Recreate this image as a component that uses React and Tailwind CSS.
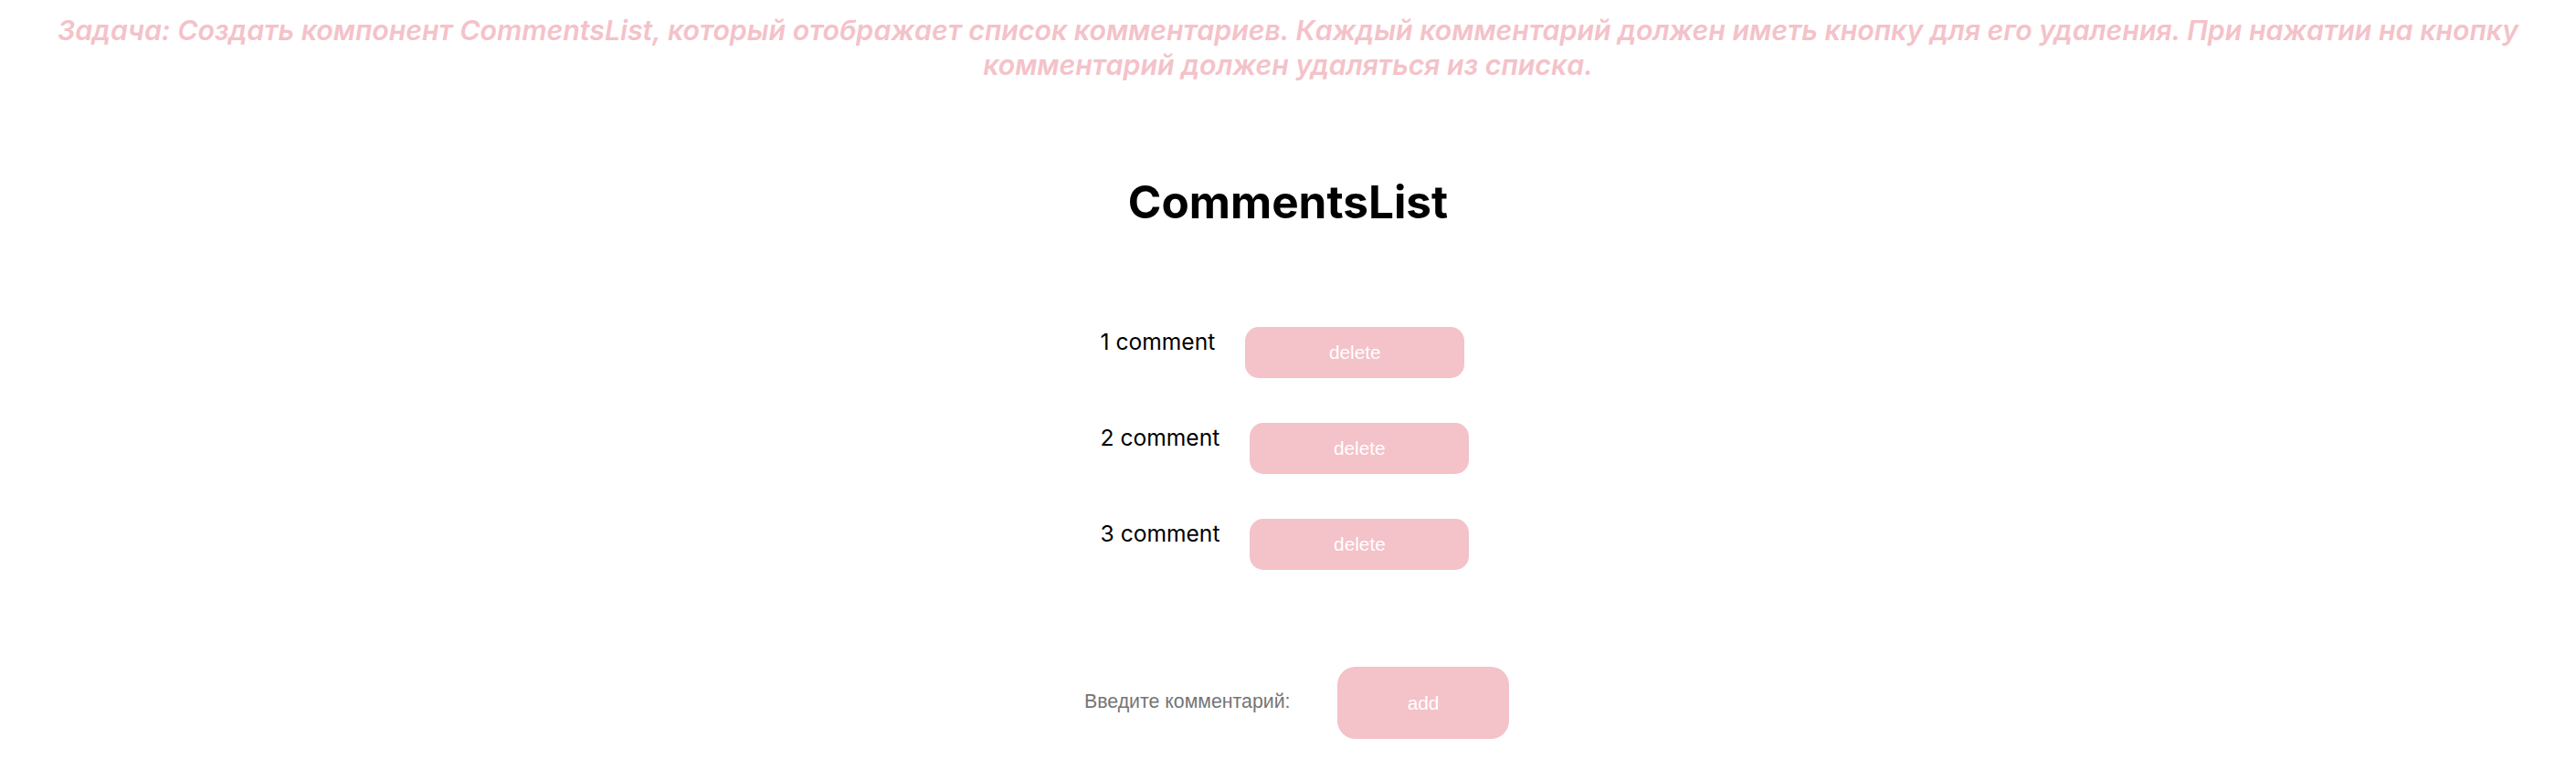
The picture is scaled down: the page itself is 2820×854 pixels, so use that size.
import React, { useState } from "react";

export default function App() {
  const [comments, setComments] = useState(["1 comment", "2 comment", "3 comment"]);
  const [value, setValue] = useState("");

  const remove = (i) => setComments((c) => c.filter((_, idx) => idx !== i));
  const add = () => {
    if (!value.trim()) return;
    setComments((c) => [...c, value]);
    setValue("");
  };

  return (
    <div className="min-h-screen bg-white flex flex-col items-center font-['Inter',sans-serif]">
      <p className="pt-[15px] text-center text-[30.3px] leading-[37.7px] font-semibold italic text-[#f4c2c9]">
        Задача: Создать компонент CommentsList, который отображает список комментариев. Каждый комментарий должен иметь кнопку для его удаления. При нажатии на кнопку
        <br />
        комментарий должен удаляться из списка.
      </p>

      <h1 className="mt-[101px] text-[49.5px] leading-[60.5px] font-bold text-black">CommentsList</h1>

      <ul className="mt-[106px] flex flex-col gap-[49px] w-fit pr-[7px]">
        {comments.map((c, i) => (
          <li key={i} className="flex items-start gap-[33px]">
            <span className="mt-[2px] text-[24.6px] leading-[29px] text-black">{c}</span>
            <button
              onClick={() => remove(i)}
              className="w-[240px] h-[56px] rounded-[15px] bg-[#f4c2c9] text-white text-[20.8px] font-['Liberation_Sans',Arial,sans-serif]"
            >
              delete
            </button>
          </li>
        ))}
      </ul>

      <div className="mt-[106px] ml-[19px] flex items-center gap-[30px]">
        <input
          value={value}
          onChange={(e) => setValue(e.target.value)}
          placeholder="Введите комментарий:"
          className="w-[247px] text-[21.3px] font-['Liberation_Sans',Arial,sans-serif] text-black placeholder:text-[#757575] outline-none"
        />
        <button
          onClick={add}
          className="w-[188px] h-[79px] rounded-[20px] bg-[#f4c2c9] text-white text-[20.8px] font-['Liberation_Sans',Arial,sans-serif]"
        >
          add
        </button>
      </div>
    </div>
  );
}
